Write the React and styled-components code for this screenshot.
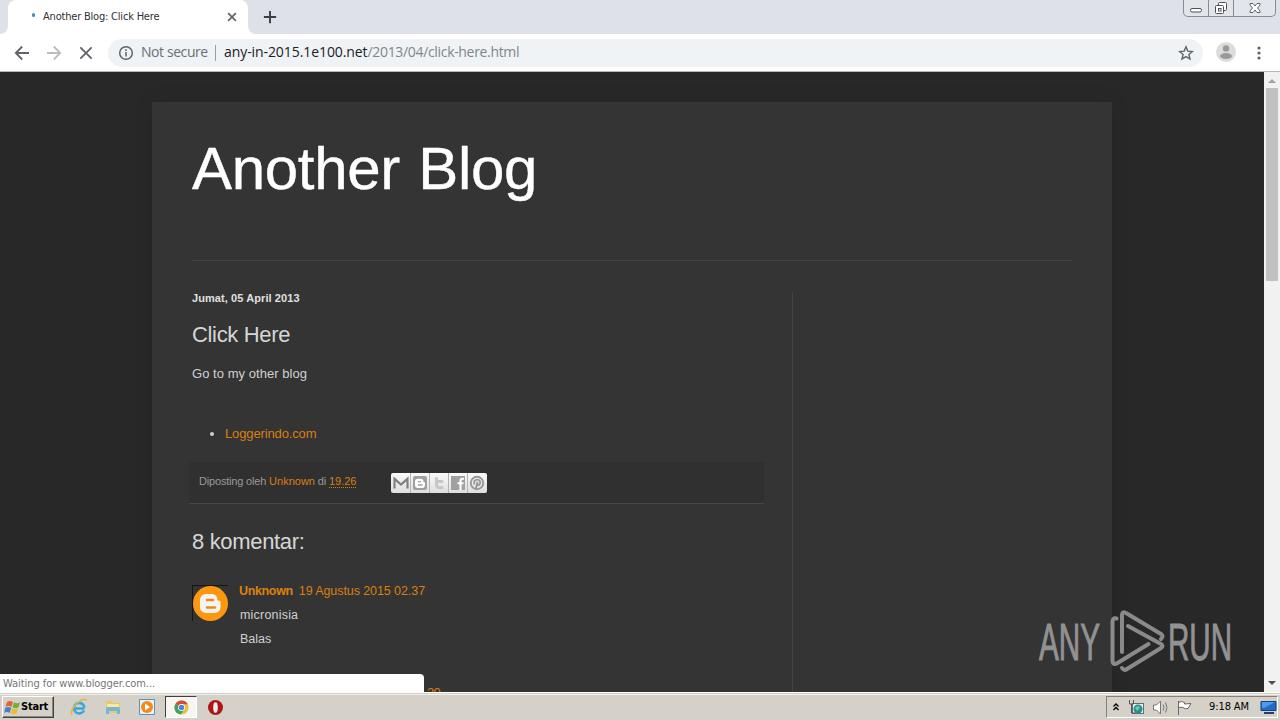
import React from "react";
import styled, { createGlobalStyle } from "styled-components";

const Global = createGlobalStyle`
  * { box-sizing: border-box; }
  body { margin: 0; overflow: hidden; }
  svg { display: block; flex: none; }
`;

const ui = `"Open Sans", "Noto Sans", sans-serif`;
const tahoma = `"DejaVu Sans Condensed", "DejaVu Sans", sans-serif`;

const Screen = styled.div`
  position: relative;
  width: 1280px;
  height: 720px;
  display: flex;
  flex-direction: column;
  overflow: hidden;
  background: #fff;
  font-family: "Liberation Sans", Arial, sans-serif;
`;

/* ---------- browser frame ---------- */
const TabStrip = styled.div`
  height: 34px;
  display: flex;
  background: #dee1e8;
`;
const TabGap = styled.div`
  width: 8px;
  background: #fff;
  &::before {
    content: "";
    display: block;
    height: 34px;
    background: #dee1e8;
    border-radius: 0 0 8px 0;
  }
`;
const Tab = styled.div`
  width: 240px;
  display: flex;
  align-items: center;
  padding: 0 10px 0 22px;
  background: #fff;
  border-radius: 8px 8px 0 0;
`;
const Loader = styled.div`
  width: 3px;
  height: 4px;
  margin: -4px 8px 0 2px;
  border-radius: 2px;
  background: #4b87c4;
`;
const TabTitle = styled.div`
  flex: 1;
  font: 11px/16px ${tahoma};
  letter-spacing: -0.2px;
  color: #303236;
  white-space: nowrap;
`;
const StripRest = styled.div`
  flex: 1;
  background: #fff;
`;
const StripFill = styled.div`
  height: 34px;
  display: flex;
  justify-content: space-between;
  background: #dee1e8;
  border-radius: 0 0 0 8px;
  padding: 0 4px 0 15px;
`;
const NewTab = styled.div`
  display: flex;
  align-items: center;
`;
const Controls = styled.div`
  display: flex;
  height: 17px;
  border: 1px solid #868b95;
  border-top: 0;
  border-radius: 0 0 5px 5px;
  background: #e2e5ea;
`;
const Control = styled.div`
  width: ${(p) => p.$w}px;
  display: flex;
  justify-content: center;
  align-items: center;
  & + & { border-left: 1px solid #868b95; }
`;
const Toolbar = styled.div`
  height: 38px;
  display: flex;
  align-items: center;
  padding: 0 14px 0 14px;
  border-bottom: 1px solid #b5b7ba;
  background: #fff;
`;
const NavButton = styled.div`
  width: 16px;
  margin-right: 16px;
`;
const Omnibox = styled.div`
  width: 1095px;
  height: 28px;
  margin-left: -2px;
  padding: 0 9px 0 10px;
  display: flex;
  align-items: center;
  border-radius: 14px;
  background: #f0f3f5;
  font: 14px/20px ${ui};
  white-space: nowrap;
`;
const Security = styled.span`
  width: 67px;
  margin: -2px 0 0 7px;
  color: #6b7074;
  letter-spacing: -0.42px;
`;
const Pipe = styled.span`
  width: 1px;
  height: 16px;
  margin: 0 8px 0 7px;
  background: #9a9ea2;
`;
const Url = styled.span`
  flex: 1;
  margin-top: -2px;
  color: #202124;
  letter-spacing: -0.08px;
`;
const Path = styled.span`
  color: #80868b;
  letter-spacing: -0.33px;
`;
const Account = styled.div`
  margin: 0 0 0 12px;
`;
const Menu = styled.div`
  margin-left: 20px;
`;

/* ---------- page ---------- */
const Viewport = styled.div`
  height: 620px;
  display: flex;
`;
const Page = styled.div`
  flex: 1;
  padding: 30px 152px 0;
  background: #282828;
  overflow: hidden;
`;
const Sheet = styled.div`
  height: 620px;
  padding: 0 40px;
  background: #343434;
  box-shadow: 0 0 20px rgba(0, 0, 0, 0.08);
`;
const Header = styled.header`
  height: 159px;
  padding-top: 32px;
  border-bottom: 1px solid #424242;
`;
const BlogTitle = styled.h1`
  margin: 0;
  font-size: 60px;
  line-height: 70px;
  font-weight: 400;
  letter-spacing: -0.32px;
  word-spacing: 2px;
  -webkit-text-stroke: 0.4px #fff;
  color: #fff;
`;
const Columns = styled.div`
  display: flex;
  padding-top: 31px;
`;
const Main = styled.main`
  width: 600px;
  height: 440px;
  color: #d0d0d0;
`;
const Sidebar = styled.aside`
  flex: 1;
  border-left: 1px solid #454545;
`;
const PostDate = styled.h2`
  margin: 0;
  font-size: 11px;
  line-height: 12px;
  letter-spacing: 0.08px;
  color: #e0e0e0;
`;
const Heading = styled.h3`
  margin: ${(p) => p.$top}px 0 0;
  font-size: 22px;
  line-height: 26px;
  font-weight: 400;
  letter-spacing: -0.33px;
  color: #d6d6d6;
`;
const Body = styled.div`
  margin-top: 17px;
  font-size: 13px;
  line-height: 18px;
  letter-spacing: 0.04px;
`;
const List = styled.ul`
  margin: 42px 0 0;
  padding: 0 0 0 33px;
  font-size: 13px;
  line-height: 18px;
`;
const Link = styled.a`
  color: #d87f10;
  letter-spacing: ${(p) => p.$ls || 0}px;
`;
const PostFooter = styled.div`
  width: 575px;
  height: 42px;
  margin: 19px 0 0 -3px;
  padding-left: 10px;
  display: flex;
  align-items: center;
  background: #303030;
  border-bottom: 1px solid #474747;
  font-size: 11px;
  line-height: 14px;
  color: #999;
`;
const Byline = styled.div`
  width: 192px;
  margin-top: -3px;
  letter-spacing: -0.18px;
  white-space: nowrap;
`;
const Time = styled(Link)`
  border-bottom: 1px dotted #d87f10;
`;
const Share = styled.div`
  display: flex;
  width: 96px;
  height: 20px;
  border-radius: 2px;
  overflow: hidden;
  background: linear-gradient(#fafafa, #dedede);
`;
const ShareButton = styled.div`
  width: 19px;
  padding: 2px 1px 0;
  & + & { border-left: 1px solid #b4b4b4; padding-left: 0; }
`;
const Comment = styled.div`
  display: flex;
  margin-top: 26px;
`;
const Avatar = styled.div`
  width: 36px;
  height: 36px;
  margin-top: 4px;
  border-top: 1px solid #161616;
  border-left: 1px solid #161616;
`;
const CommentBody = styled.div`
  margin-left: 11px;
  font-size: 12.5px;
  line-height: 24px;
`;
const CommentLine = styled.div`
  margin-top: ${(p) => (p.$first ? -2 : 0)}px;
  padding-left: ${(p) => (p.$first ? 0 : 1)}px;
  letter-spacing: ${(p) => p.$ls || 0}px;
`;
const Author = styled.b`
  margin-right: 6px;
  letter-spacing: -0.35px;
  color: #dd820c;
`;
const NextComment = styled.div`
  margin: 33px 0 0 235px;
  font-size: 13px;
  line-height: 18px;
  color: #d87f10;
  letter-spacing: -0.7px;
`;
const Scrollbar = styled.div`
  width: 16px;
  display: flex;
  flex-direction: column;
  align-items: center;
  background: #f1f1f1;
`;
const Thumb = styled.div`
  width: 12px;
  height: 193px;
  margin-bottom: auto;
  background: #c1c1c1;
`;
const StatusBubble = styled.div`
  position: absolute;
  left: 0;
  top: 674px;
  width: 424px;
  height: 18px;
  padding: 1px 0 0 3px;
  border-radius: 0 4px 0 0;
  background: #fff;
  font: 11px/18px ${tahoma};
  letter-spacing: -0.06px;
  color: #74777a;
`;
const Watermark = styled.div`
  position: absolute;
  left: 1036px;
  top: 606px;
`;

/* ---------- taskbar ---------- */
const Taskbar = styled.div`
  height: 28px;
  display: flex;
  align-items: center;
  padding-top: 1px;
  border-top: 1px solid #fff;
  background: #d5d1c9;
  box-shadow: inset 0 1px 0 #d5d1c9, inset 0 2px 0 #f0eeea;
`;
const Start = styled.div`
  width: 52px;
  height: 22px;
  margin: 0 8px 0 2px;
  display: flex;
  align-items: center;
  padding-left: 1px;
  border: 1px solid;
  border-color: #fff #404040 #404040 #fff;
  box-shadow: inset -1px -1px 0 #8d8981;
  font: bold 11px/16px ${tahoma};
  letter-spacing: -0.2px;
  color: #000;
`;
const Launch = styled.div`
  width: 34px;
  height: 22px;
  display: flex;
  align-items: center;
  justify-content: center;
`;
const ActiveTask = styled(Launch)`
  width: 32px;
  margin: 0 1px;
  border: 1px solid;
  border-color: #404040 #fff #fff #404040;
  background: #f7f6f4;
`;
const Tray = styled.div`
  width: 172px;
  height: 22px;
  margin: 0 2px 0 auto;
  padding-left: 5px;
  display: flex;
  align-items: center;
  border: 1px solid;
  border-color: #85817a #fff #fff #85817a;
`;
const TraySlot = styled.div`
  width: ${(p) => p.$w}px;
`;
const Clock = styled.div`
  width: 51px;
  font: 11px/16px ${tahoma};
  letter-spacing: -0.1px;
  color: #000;
  white-space: nowrap;
`;

const B = "M5 2h4.2a3.6 3.6 0 0 1 3.6 3.6c0 .8.3 1 1 1 .7 0 1.2.4 1.2 1.1V11a4 4 0 0 1-4 4H5a4 4 0 0 1-4-4V6a4 4 0 0 1 4-4z";

function Stroke({ size = 16, color = "#5f6368", d, w = 1.8 }) {
  return (
    <svg width={size} height={size} viewBox="0 0 16 16" fill="none" stroke={color} strokeWidth={w}>
      <path d={d} />
    </svg>
  );
}

function Browser() {
  return (
    <>
      <TabStrip>
        <TabGap />
        <Tab>
          <Loader />
          <TabTitle>Another Blog: Click Here</TabTitle>
          <Stroke size={12} d="M2.8 2.8l10.4 10.4M13.2 2.8L2.8 13.2" w={2.2} />
        </Tab>
        <StripRest>
          <StripFill>
            <NewTab><Stroke size={14} color="#3c4043" d="M8 1v14M1 8h14" w={2.2} /></NewTab>
            <Controls>
              <Control $w={24}>
                <svg width="14" height="16" fill="#fff" stroke="#4d5159"><rect x="1.5" y="8.5" width="11" height="3.5" rx="1.5" /></svg>
              </Control>
              <Control $w={25}>
                <svg width="14" height="16" fill="#fff" stroke="#4d5159">
                  <rect x="4.500" y="2.500" width="8" height="8" rx="1" /><rect x="1.500" y="5.500" width="8" height="8" rx="1" /><rect x="4.500" y="8.500" width="2.500" height="2.500" />
                </svg>
              </Control>
              <Control $w={42}>
                <svg width="14" height="16" fill="#fff" stroke="#60646c"><path d="M2 3.500h3l2 2.500 2-2.500h3v1.500L9.500 8l2.500 3v1.500H9L7 10l-2 2.500H2V11l2.500-3L2 5z" /></svg>
              </Control>
            </Controls>
          </StripFill>
        </StripRest>
      </TabStrip>
      <Toolbar>
        <NavButton><Stroke d="M15 8H2M8.200 1.500L1.800 8l6.400 6.500" /></NavButton>
        <NavButton><Stroke color="#babcbe" d="M1 8h13M7.800 1.500L14.200 8l-6.400 6.500" /></NavButton>
        <NavButton><Stroke d="M2.300 2.300l11.400 11.400M13.700 2.300L2.300 13.700" /></NavButton>
        <Omnibox>
          <svg width="16" height="16" fill="none" stroke="#5f6368" strokeWidth="1.500">
            <circle cx="8" cy="8" r="6.300" /><path d="M8 7v4.500M8 4.300v1.600" />
          </svg>
          <Security>Not secure</Security>
          <Pipe />
          <Url>any-in-2015.1e100.net<Path>/2013/04/click-here.html</Path></Url>
          <Stroke d="M8 1.800l1.800 4.300 4.600.4-3.500 3 1.100 4.500L8 11.600 4 14l1.100-4.500-3.500-3 4.600-.4z" w={1.4} />
        </Omnibox>
        <Account>
          <svg width="22" height="22">
            <circle cx="11" cy="10" r="10" fill="#dcdcdc" /><circle cx="11" cy="6.400" r="3.200" fill="#999" /><ellipse cx="11" cy="14" rx="6" ry="3" fill="#999" />
          </svg>
        </Account>
        <Menu>
          <svg width="4" height="16" fill="#5f6368"><circle cx="2" cy="3" r="1.600" /><circle cx="2" cy="8" r="1.600" /><circle cx="2" cy="13" r="1.600" /></svg>
        </Menu>
      </Toolbar>
    </>
  );
}

function ShareBar() {
  return (
    <Share>
      <ShareButton><svg width="17" height="16" fill="none" stroke="#808080" strokeWidth="2.200"><path d="M2.500 13.500V3.800L9 9.500l6.500-5.700v9.700" /></svg></ShareButton>
      <ShareButton>
        <svg width="17" height="16"><rect x="2" y="1" width="14" height="14" rx="2" fill="#a0a0a0" /><path d={B} fill="#fff" transform="translate(3.300 2.300) scale(.710)" /><path d="M7 6.600h3M7 10h4.500" stroke="#a0a0a0" strokeWidth="1.400" /></svg>
      </ShareButton>
      <ShareButton><svg width="17" height="16" fill="none" stroke="#c6c6c6" strokeWidth="3" strokeLinecap="round"><path d="M6.500 3.500V9.500q0 3 3 3h2.500M6.500 6.500h5.500" /></svg></ShareButton>
      <ShareButton>
        <svg width="17" height="16"><path d="M2 1h14v14H2z" fill="#a0a0a0" /><path d="M15 3.800h-1.500q-2 0-2 2V15M8.500 8.300h6" fill="none" stroke="#fff" strokeWidth="2.100" /></svg>
      </ShareButton>
      <ShareButton>
        <svg width="17" height="16" fill="none" stroke="#989898" strokeWidth="1.900"><circle cx="9" cy="8" r="6.200" /><path d="M6.500 9.300C5.200 6.500 7 4.600 9.300 4.600s3.600 2.200 2.600 4.200-2.900 1.400-2.900.3M9.500 6.800L7.800 14" /></svg>
      </ShareButton>
    </Share>
  );
}

function Blog() {
  return (
    <Page>
      <Sheet>
        <Header><BlogTitle>Another Blog</BlogTitle></Header>
        <Columns>
          <Main>
            <PostDate>Jumat, 05 April 2013</PostDate>
            <Heading $top={18}>Click Here</Heading>
            <Body>Go to my other blog</Body>
            <List><li><Link $ls={-0.13}>Loggerindo.com</Link></li></List>
            <PostFooter>
              <Byline>Diposting oleh <Link>Unknown</Link> di <Time>19.26</Time></Byline>
              <ShareBar />
            </PostFooter>
            <Heading as="h4" $top={25}>8 komentar:</Heading>
            <Comment>
              <Avatar>
                <svg width="36" height="36"><circle cx="17.500" cy="17.500" r="17.500" fill="#fb980f" /><path d={B} fill="#f4f4f4" transform="translate(5.500 5) scale(1.470)" /><path d="M14 14h6M14 21.500h8" stroke="#ed8b13" strokeWidth="2.600" strokeLinecap="round" /></svg>
              </Avatar>
              <CommentBody>
                <CommentLine $first><Author>Unknown</Author><Link $ls={-0.08}>19 Agustus 2015 02.37</Link></CommentLine>
                <CommentLine $ls={0.2}>micronisia</CommentLine>
                <CommentLine>Balas</CommentLine>
              </CommentBody>
            </Comment>
            <NextComment>20</NextComment>
          </Main>
          <Sidebar />
        </Columns>
      </Sheet>
    </Page>
  );
}

function AnyRun() {
  return (
    <Watermark>
      <svg width="210" height="76" fill="#929292" stroke="#929292" strokeWidth="1" fontFamily="Liberation Sans, sans-serif" fontSize="52">
        <text x="3" y="53.500" textLength="61" lengthAdjust="spacingAndGlyphs">ANY</text>
        <text x="132" y="53.500" textLength="64" lengthAdjust="spacingAndGlyphs">RUN</text>
        <g fill="none" stroke="#8a8a8a" strokeWidth="4" strokeLinejoin="round" strokeLinecap="round">
          <path d="M80.500 12.500Q76.500 11.500 76.500 16v38q0 6 5 3l31-19" />
          <path d="M86 46V9q0-4 4-2l35 21q3 2 0 5" />
          <path d="M92 20l33 18q3 2 0 4L91 63q-3 2-5-1" />
        </g>
      </svg>
    </Watermark>
  );
}

function Chrome() {
  return (
    <svg width="15" height="15" viewBox="0 0 16 16">
      <circle cx="8" cy="8" r="7.500" fill="#e8c23a" /><path d="M8 8L1.500 4.200A7.500 7.500 0 0 1 14.700 4.600H8z" fill="#d44937" />
      <path d="M8 8L1.500 4.200A7.500 7.500 0 0 0 7.200 15.500L11 9.800z" fill="#3fa35b" /><circle cx="8" cy="8" r="3.700" fill="#fff" /><circle cx="8" cy="8" r="2.900" fill="#4c86db" />
    </svg>
  );
}

function Launches() {
  return (
    <>
      <Launch>
        <svg width="18" height="18" fill="none"><path d="M14.500 10.500H5M14 12.500a5.300 5.300 0 1 1 .5-3" stroke="#3ba6dc" strokeWidth="2.600" /><path d="M2 16.500C-1 13 10-1 16.500 2" stroke="#e0b544" strokeWidth="1.500" /></svg>
      </Launch>
      <Launch>
        <svg width="18" height="18"><path d="M2 3h6l1 2h7v10H2z" fill="#e7ca67" /><path d="M3 6h12v5H3z" fill="#f9e99f" /><path d="M2 16v-5q0-2 2-2h10q2 0 2 2v5h-3v-3H5v3z" fill="#72b7d9" /></svg>
      </Launch>
      <Launch>
        <svg width="18" height="18"><path d="M1.500 1.500h15v15h-15z" fill="#e9f1f7" stroke="#5e91bd" /><circle cx="9" cy="9" r="6" fill="#f18b19" /><path d="M7 5.500l5 3.500-5 3.500z" fill="#fff" /></svg>
      </Launch>
      <ActiveTask><Chrome /></ActiveTask>
      <Launch>
        <svg width="17" height="17"><circle cx="8.500" cy="8.500" r="7.500" fill="#ae1517" /><ellipse cx="8.500" cy="8.500" rx="2.300" ry="5.300" fill="#eee" /></svg>
      </Launch>
    </>
  );
}

function Desk() {
  return (
    <Taskbar>
      <Start>
        <svg width="17" height="17" viewBox="0 0 17 17">
          <path d="M3 3q3-2 6 0L7.500 8q-3-2-6 0z" fill="#e9642d" /><path d="M10 3.300q3 1.700 6 0L14.500 8.300q-3 1.700-6 0z" fill="#74af3d" />
          <path d="M1.200 9q3-2 6 0l-1.500 5q-3-2-5.500 0z" fill="#3e83ce" /><path d="M8.200 9.300q3 1.700 6 0l-1.500 5q-3 1.700-6 0z" fill="#efbb32" />
        </svg>
        Start
      </Start>
      <Launches />
      <Tray>
        <TraySlot $w={16}><Stroke size={8} color="#000" d="M3 7l5-5 5 5M3 14l5-5 5 5" w={2.6} /></TraySlot>
        <TraySlot $w={24}>
          <svg width="17" height="17"><rect x="4.500" y="4.500" width="11" height="10" fill="#eee" stroke="#59737d" /><circle cx="10" cy="10" r="4.500" fill="#278f96" /><path d="M7 9q3-4 5 0l-3 3" fill="#76c6a1" /><path d="M1.500 1v4h4V1M3.500 5v9h4" fill="none" stroke="#555" /></svg>
        </TraySlot>
        <TraySlot $w={24}>
          <svg width="18" height="17" fill="#fff" stroke="#777"><path d="M1.500 6h3l4-4v13l-4-4h-3z" /><path d="M11 5.500q2 3 0 6M13.500 3.500q3 5 0 10" fill="none" /></svg>
        </TraySlot>
        <TraySlot $w={33}>
          <svg width="18" height="17" fill="#fff" stroke="#666"><path d="M2.500 2v14M2.500 3.500q3-2 6 0V5l6.500-.5-3 5q-3 1-5-1-2-.5-4 0" /></svg>
        </TraySlot>
        <Clock>9:18 AM</Clock>
        <svg width="17" height="16"><path d="M1 2.500h15v9H1z" fill="#236bc9" stroke="#173f82" /><path d="M2 3h13L4 9H2z" fill="#4e9be8" /><path d="M4 14h10" stroke="#293e62" strokeWidth="2" /></svg>
      </Tray>
    </Taskbar>
  );
}

export default function App() {
  return (
    <Screen>
      <Global />
      <Browser />
      <Viewport>
        <Blog />
        <Scrollbar>
          <svg width="16" height="16"><path d="M4 11l4-4 4 4z" fill="#a3a3a3" /></svg>
          <Thumb />
          <svg width="16" height="16"><path d="M4 5l4 4 4-4z" fill="#505050" /></svg>
        </Scrollbar>
      </Viewport>
      <StatusBubble>Waiting for www.blogger.com...</StatusBubble>
      <AnyRun />
      <Desk />
    </Screen>
  );
}
